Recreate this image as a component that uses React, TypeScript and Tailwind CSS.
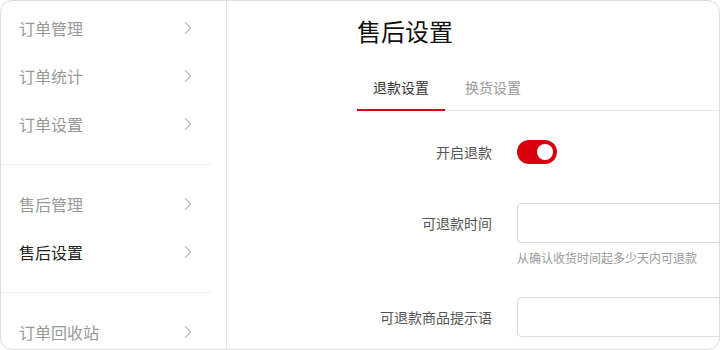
import React from "react";

const Chevron = () => (
  <svg width="8" height="14" viewBox="0 0 8 14" fill="none">
    <polyline points="1.5,1.5 6.5,7 1.5,12.5" stroke="#c4c4c4" strokeWidth="1.5" strokeLinecap="round" strokeLinejoin="round" />
  </svg>
);

const Item = ({ label, active = false }: { label: string; active?: boolean }) => (
  <div className="h-[48px] flex items-center justify-between pl-[18px] pr-[18px]">
    <span className={`text-[16px] leading-[24px] ${active ? "text-[#222]" : "text-[#999]"}`}>{label}</span>
    <Chevron />
  </div>
);

export default function App() {
  return (
    <div
      className="w-[720px] h-[350px] border border-[#dcdcdc] rounded-[12px] overflow-hidden flex bg-white"
      style={{ fontFamily: '"Noto Sans CJK SC", "Noto Sans", sans-serif' }}
    >
      <div className="w-[226px] shrink-0 border-r border-[#e2e2e2] pt-[3px]">
        <div className="mr-[16px] pb-[16px] border-b border-[#ebebeb]">
          <Item label="订单管理" />
          <Item label="订单统计" />
          <Item label="订单设置" />
        </div>
        <div className="mr-[16px] pt-[15px] pb-[16px] border-b border-[#ebebeb]">
          <Item label="售后管理" />
          <Item label="售后设置" active />
        </div>
        <div className="mr-[16px] pt-[15px]">
          <Item label="订单回收站" />
        </div>
      </div>
      <div className="flex-1 min-w-0 pl-[130px]">
        <div className="mt-[14px] text-[24px] leading-[32px] text-[#111]">售后设置</div>
        <div className="mt-[18px] flex border-b border-[#e8e8e8]">
          <div className="px-[16px] pt-[12px] pb-[12px] text-[14px] leading-[20px] text-[#333] border-b-2 border-[#d7000f] -mb-px">
            退款设置
          </div>
          <div className="ml-[4px] px-[16px] pt-[12px] pb-[12px] text-[14px] leading-[20px] text-[#999]">
            换货设置
          </div>
        </div>
        <div className="mt-[21px] h-[40px] flex items-center">
          <div className="w-[135px] text-right text-[14px] leading-[20px] text-[#555]">开启退款</div>
          <div className="ml-[25px] w-[40px] h-[24px] rounded-full bg-[#d7000f] flex items-center justify-end pr-[4px]">
            <div className="w-[16px] h-[16px] rounded-full bg-white" />
          </div>
        </div>
        <div className="mt-[31px] h-[40px] flex items-center">
          <div className="w-[135px] shrink-0 text-right text-[14px] leading-[20px] text-[#555]">可退款时间</div>
          <div className="ml-[25px] shrink-0 w-[300px] h-[40px] border border-[#dcdcdc] rounded-[4px]" />
        </div>
        <div className="mt-[6px] ml-[160px] text-[12px] leading-[18px] text-[#999] whitespace-nowrap">
          从确认收货时间起多少天内可退款
        </div>
        <div className="mt-[30px] h-[40px] flex items-center">
          <div className="w-[135px] shrink-0 text-right text-[14px] leading-[20px] text-[#555]">可退款商品提示语</div>
          <div className="ml-[25px] shrink-0 w-[300px] h-[40px] border border-[#dcdcdc] rounded-[4px]" />
        </div>
      </div>
    </div>
  );
}
